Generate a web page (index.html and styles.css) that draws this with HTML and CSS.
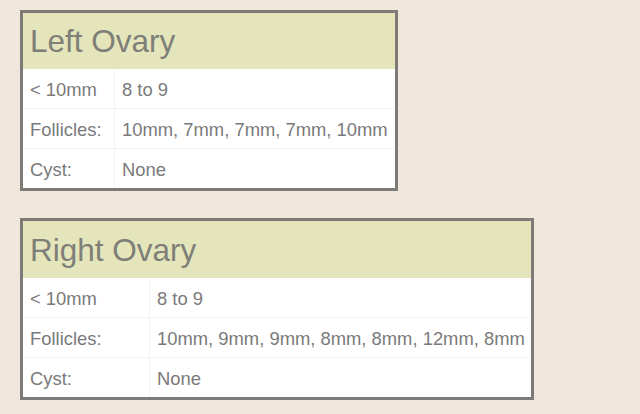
FILE: index.html
```html
<!DOCTYPE html>
<html>
<head>
<meta charset="utf-8">
<link rel="stylesheet" href="styles.css">
</head>
<body>
<div class="page">
  <table class="ovary ovary-left">
    <colgroup><col class="col-label"><col></colgroup>
    <tr><th colspan="2" class="title">Left Ovary</th></tr>
    <tr><td class="label">&lt; 10mm</td><td class="value">8 to 9</td></tr>
    <tr><td class="label">Follicles:</td><td class="value">10mm, 7mm, 7mm, 7mm, 10mm</td></tr>
    <tr class="last"><td class="label">Cyst:</td><td class="value">None</td></tr>
  </table>
  <table class="ovary ovary-right">
    <colgroup><col class="col-label"><col></colgroup>
    <tr><th colspan="2" class="title">Right Ovary</th></tr>
    <tr><td class="label">&lt; 10mm</td><td class="value">8 to 9</td></tr>
    <tr><td class="label">Follicles:</td><td class="value">10mm, 9mm, 9mm, 8mm, 8mm, 12mm, 8mm</td></tr>
    <tr class="last"><td class="label">Cyst:</td><td class="value">None</td></tr>
  </table>
</div>
</body>
</html>
```
FILE: styles.css
```css
html, body {
  margin: 0;
  padding: 0;
  background: #efe6dc;
}
.page {
  padding: 10px 0 0 20px;
  display: flex;
  flex-direction: column;
  align-items: flex-start;
  gap: 27px;
  font-family: "Liberation Sans", Arial, sans-serif;
}
.ovary {
  border: 3px solid #7d7a77;
  border-collapse: separate;
  border-spacing: 0;
  background: #ffffff;
  table-layout: fixed;
}
.ovary-left { width: 378px; }
.ovary-right { width: 514px; }
.ovary-left .col-label { width: 92px; }
.ovary-right .col-label { width: 127px; }
.title {
  background: #e4e5ba;
  color: #7f7f79;
  font-size: 31.5px;
  font-weight: normal;
  text-align: left;
  padding: 0 0 0 7px;
  height: 56px;
  line-height: 32px;
}
.ovary-right .title { height: 57px; }
.ovary td {
  height: 40px;
  padding: 2px 0 0 7px;
  font-size: 18.4px;
  color: #7a7a7a;
  vertical-align: middle;
  border-bottom: 1px solid #f3f3f3;
  white-space: nowrap;
  box-sizing: border-box;
}
.ovary tr.last td {
  border-bottom: none;
  height: 39px;
}
.ovary td.label {
  border-right: 1px solid #f3f3f3;
}
```
